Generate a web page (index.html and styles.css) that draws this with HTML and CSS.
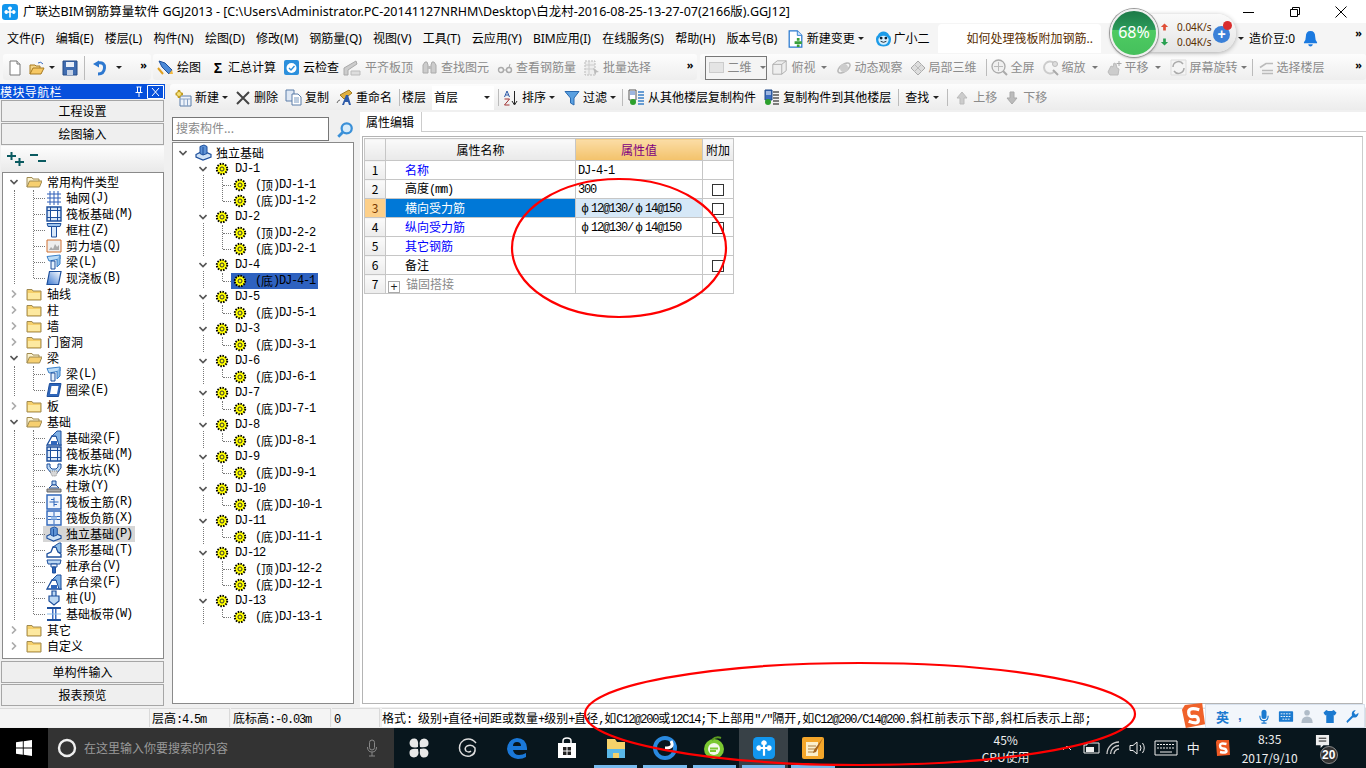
FILE: index.html
```html
<!DOCTYPE html>
<html lang="zh">
<head>
<meta charset="utf-8">
<title>广联达BIM钢筋算量软件 GGJ2013</title>
<link rel="stylesheet" href="styles.css">
</head>
<body>
<svg class="defs" width="0" height="0" aria-hidden="true">
  <symbol id="cd" viewBox="0 0 8 8"><path d="M.5 2 4 5.5 7.500 2" fill="none" stroke="#555" stroke-width="1.600"/></symbol>
  <symbol id="cr" viewBox="0 0 8 8"><path d="M2 .5 5.500 4 2 7.500" fill="none" stroke="#aaa" stroke-width="1.600"/></symbol>
  <symbol id="fc" viewBox="0 0 16 16"><path d="M1 3.500h5l1 1.500h8v9H1z" fill="#f5cf6a" stroke="#a08a50"/><path d="M2 7h12v6H2z" fill="#fde9a0"/></symbol>
  <symbol id="fo" viewBox="0 0 16 16"><path d="M1 13V3.500h5l1 1.500h6v2" fill="#fbf3d0" stroke="#a08a50"/><path d="M1 13l2.500-6H16l-2.500 6z" fill="#f6cf70" stroke="#a08a50"/></symbol>
  <symbol id="gr" viewBox="0 0 14 14"><circle cx="7" cy="7" r="5.200" fill="#ff0" stroke="#000" stroke-width="2" stroke-dasharray="1.500 1.200"/><circle cx="7" cy="7" r="2" fill="none" stroke="#333"/></symbol>
  <symbol id="grid" viewBox="0 0 16 16"><path d="M1 4h14M1 8h14M1 12h14M4 1v14M8 1v14M12 1v14" stroke="#2f5fb8" fill="none"/></symbol>
  <symbol id="raft" viewBox="0 0 16 16"><path d="M1 1h14v14H1z" fill="#d8e6f8" stroke="#1d4f9c" stroke-width="1.400"/><path d="M4.500 4.500h7v7h-7zM1 4.500h14M1 11.500h14M4.500 1v14M11.500 1v14" fill="#fff" stroke="#1d4f9c"/></symbol>
  <symbol id="col" viewBox="0 0 16 16"><path d="M1 1.500h14l-1 3H2z" fill="#9cc3ec" stroke="#1d4f9c"/><path d="M5.500 4.500h5V15h-5z" fill="#d8e8fa" stroke="#1d4f9c"/></symbol>
  <symbol id="wall" viewBox="0 0 16 16"><path d="M1 2h14v12H1z" fill="#eee" stroke="#d07030"/><path d="M3 12l2-3 2 2 2-5 2 3 2-2v5z" fill="#aaa"/></symbol>
  <symbol id="beam" viewBox="0 0 16 16"><path d="M1 2.500 14 1v4L3 7z" fill="#bcdcf6" stroke="#3a80c8"/><path d="M5 7h4v8H5z" fill="#e4f1fc" stroke="#1d4f9c"/><path d="M11 5v8l3-3V1" fill="#8ebde8" stroke="#3a80c8"/></symbol>
  <symbol id="slab" viewBox="0 0 16 16"><path d="M3.500 1.500H15L12.500 14.500H1z" fill="url(#sl)" stroke="#1d4f9c" stroke-width="1.200"/><linearGradient id="sl" x1="0" x2="1" y1="1" y2="0"><stop offset="0" stop-color="#3b78d0"/><stop offset="1" stop-color="#fff"/></linearGradient></symbol>
  <symbol id="ring" viewBox="0 0 16 16"><path d="M3.500 1.500H15L12.500 14.500H1z" fill="#2f66ba" stroke="#1d4f9c"/><path d="M5.500 4h7l-1.500 8H4z" fill="#fff"/></symbol>
  <symbol id="fb" viewBox="0 0 16 16"><path d="M1 15 6 6h4l5 9z" fill="#fff" stroke="#1d4f9c" stroke-width="1.300"/><path d="M6 6 11 1h4v14h-2L10 6z" fill="#7fb0e4" stroke="#1d4f9c"/><path d="M5 11h6v4H5z" fill="#2f66ba"/></symbol>
  <symbol id="pit" viewBox="0 0 16 16"><path d="M1 2h3v3l2 2h4l2-2V2h3v4l-4 5H5L1 6z" fill="#bcd8f4" stroke="#1d4f9c"/><path d="M4 9h8l-2 5H6z" fill="#d8d8d8" stroke="#888" stroke-dasharray="1 1"/></symbol>
  <symbol id="pier" viewBox="0 0 16 16"><path d="M6 3h4v4H6z" fill="#bcd8f4" stroke="#1d4f9c"/><path d="M3 10 6 7h4l3 3z" fill="#eee" stroke="#1d4f9c"/><path d="M1 11h14v3H1z" fill="#aaa" stroke="#666"/></symbol>
  <symbol id="rm" viewBox="0 0 16 16"><path d="M1 1h14v14H1z" fill="#eef4fc" stroke="#2f66ba" stroke-width="1.400"/><path d="M3.500 8h9M8 3.500v9M5 5.500h3M8 10.500h3" stroke="#2f66ba" fill="none"/></symbol>
  <symbol id="rn" viewBox="0 0 16 16"><path d="M1 1h14v14H1z" fill="#eef4fc" stroke="#2f66ba" stroke-width="1.400"/><path d="M2 6.500h12M2 9.500h12M8 2v12" stroke="#2f66ba" fill="none"/><path d="M5 6.500h6v3H5z" fill="#9ec0ea"/></symbol>
  <symbol id="iso" viewBox="0 0 17 17"><path d="M1 10.500 8 7l8 3.500v2.500L8 16l-7-3z" fill="#cfe2f6" stroke="#1d4f9c" stroke-width="1.200"/><path d="M5 2.500 9 1l3 1.500v7L8 11 5 9.500z" fill="#5e93d6" stroke="#1d4f9c"/><path d="M8 3v8" stroke="#1d4f9c"/></symbol>
  <symbol id="strip" viewBox="0 0 16 16"><path d="M1 15v-3l4-2 2-5h3l2 5 3 2v3z" fill="#fff" stroke="#1d4f9c" stroke-width="1.300"/><path d="M7 5l6-4h2v10l-3-1-2-5z" fill="#8ebde8" stroke="#1d4f9c"/></symbol>
  <symbol id="cap" viewBox="0 0 16 16"><path d="M1 2h14l-1 4H2z" fill="#bcd8f4" stroke="#1d4f9c"/><path d="M5 6h6v3H5z" fill="#eef4fc" stroke="#1d4f9c"/><path d="M6.500 9h3v6h-3z" fill="#2f66ba" stroke="#1d4f9c"/></symbol>
  <symbol id="pile" viewBox="0 0 16 16"><path d="M6 1h4v5H6zM3 6h10v5l-5 4-5-4z" fill="#bcd8f4" stroke="#1d4f9c" stroke-width="1.200"/></symbol>
  <symbol id="band" viewBox="0 0 16 16"><path d="M1 2h14M1 14h14" stroke="#1d4f9c" stroke-width="2"/><path d="M6 3h1.500v10H6zM9 3h1.500v10H9z" fill="#3a6cc0"/><path d="M1 8h14" stroke="#8ebde8"/></symbol>
  <symbol id="new" viewBox="0 0 16 16"><path d="M3 1h7l3 3v11H3z" fill="#fff" stroke="#777"/><path d="M10 1v3h3" fill="#eee" stroke="#777"/></symbol>
  <symbol id="open" viewBox="0 0 16 16"><path d="M1 14V5h5l1 1h4v2" fill="#f3d489" stroke="#a87a20"/><path d="M1 14l3-6h11l-3 6z" fill="#f6c864" stroke="#a87a20"/><path d="M9 3q3-2 5 1" fill="none" stroke="#3a6cc0"/></symbol>
  <symbol id="save" viewBox="0 0 16 16"><path d="M1 1h14v14H1z" fill="#3f6cb0" stroke="#244a86"/><path d="M4 2h8v5H4z" fill="#e8eef8"/><path d="M5 10h6v5H5z" fill="#c5d2e6"/></symbol>
  <symbol id="undo" viewBox="0 0 16 16"><path d="M6 3q7-1 6.500 5T6 14" fill="none" stroke="#2d78d0" stroke-width="3"/><path d="M1 4l6-3.500v7z" fill="#2d78d0"/></symbol>
  <symbol id="draw" viewBox="0 0 17 17"><path d="M2 2l6 2 7 7-3 4-7-7z" fill="#4c8ad8" stroke="#1d4f9c"/><path d="M12 15l3-4 1 4z" fill="#f5b93c"/><path d="M1 9l5 6" stroke="#e0a020" stroke-width="2"/></symbol>
  <symbol id="cloud" viewBox="0 0 17 17"><rect x="1" y="1" width="15" height="15" rx="2" fill="#2b8fdc"/><circle cx="8.500" cy="9" r="5" fill="#fff"/><path d="M6 9l2 2 3.500-4" fill="none" stroke="#2b8fdc" stroke-width="1.400"/></symbol>
  <symbol id="dalign" viewBox="0 0 20 17"><path d="M2 16V9l12-7 1 3-9 6v5z" fill="#ccc" stroke="#aaa"/><path d="M9 12h9v4H9z" fill="#ddd" stroke="#bbb"/></symbol>
  <symbol id="dbino" viewBox="0 0 17 17"><path d="M2 14V6l2-3h2l1 3v8zM10 14V6l1-3h2l2 3v8z" fill="#ccc" stroke="#aaa"/><path d="M7 7h3v3H7z" fill="#bbb"/></symbol>
  <symbol id="dglass" viewBox="0 0 16 16"><circle cx="4" cy="10" r="2.500" fill="none" stroke="#aaa" stroke-width="1.400"/><circle cx="12" cy="10" r="2.500" fill="none" stroke="#aaa" stroke-width="1.400"/><path d="M6.500 10h3M12 7.500 13 4" stroke="#aaa" fill="none"/></symbol>
  <symbol id="dbatch" viewBox="0 0 16 16"><path d="M1 1h10v14H1z" fill="#eee" stroke="#bbb" stroke-dasharray="2 1"/><path d="M1 5h10M1 9h10M5 1v14" stroke="#ccc"/><path d="M9 8l6 4-3 .5-.5 3z" fill="#bbb"/></symbol>
  <symbol id="dcube" viewBox="0 0 19 17"><path d="M2 5l5-4h10v11l-5 4H2z" fill="#eee" stroke="#aaa"/><path d="M2 5h10v11M12 5l5-4" fill="none" stroke="#aaa"/></symbol>
  <symbol id="dorbit" viewBox="0 0 16 16"><ellipse cx="8" cy="8" rx="7" ry="3.500" transform="rotate(-35 8 8)" fill="none" stroke="#bbb" stroke-width="1.600"/><circle cx="8" cy="8" r="4" fill="#ccc"/></symbol>
  <symbol id="dpart" viewBox="0 0 16 16"><path d="M8 1l7 7-7 7-7-7z" fill="#ddd" stroke="#aaa"/><path d="M4 4l8 8M12 4l-8 8" stroke="#bbb"/></symbol>
  <symbol id="dfull" viewBox="0 0 17 17"><circle cx="7.500" cy="7.500" r="6.500" fill="#f0f0f0" stroke="#aaa" stroke-width="1.300"/><path d="M7.500 3v9M3 7.500h9" stroke="#bbb"/><path d="M12 12l4 4" stroke="#aaa" stroke-width="2"/></symbol>
  <symbol id="dzoom" viewBox="0 0 16 16"><path d="M11 3a6 6 0 1 0 0 9" fill="none" stroke="#ccc" stroke-width="2"/><circle cx="12" cy="4" r="2.500" fill="#ddd" stroke="#bbb"/><path d="M10 10l5 5" stroke="#aaa" stroke-width="2"/></symbol>
  <symbol id="dpan" viewBox="0 0 16 16"><path d="M2 12l3-6 2 1 1-4 2 1 1 4 2 1-1 6H4z" fill="#ccc" stroke="#bbb"/><path d="M13 1v5M10.500 3.500h5" stroke="#aaa"/></symbol>
  <symbol id="drot" viewBox="0 0 17 17"><path d="M1 1h15v15H1z" fill="#f4f4f4" stroke="#ddd"/><path d="M3 8a5.500 5.500 0 0 1 10-3M14 9a5.500 5.500 0 0 1-10 3" fill="none" stroke="#aaa" stroke-width="1.500"/></symbol>
  <symbol id="dlay" viewBox="0 0 15 15"><path d="M1 7l6-4h7M3 10h11M3 13h11" fill="none" stroke="#bbb" stroke-width="1.600"/></symbol>
  <symbol id="tnew" viewBox="0 0 18 18"><path d="M6 7h11v10H6z" fill="#eef3fa" stroke="#5a7ca8"/><path d="M6 10h11M10 10v7M13.500 10v7" stroke="#8aa4c6"/><path d="M5 1v3M1.500 5H4.500M6 5h3M5 6v3" stroke="#c09a20" stroke-width="2.400"/><circle cx="5" cy="5" r="2.500" fill="#f6e27a" stroke="#c09a20"/></symbol>
  <symbol id="tdel" viewBox="0 0 16 16"><path d="M2 2l12 12M14 2 2 14" stroke="#444" stroke-width="2"/></symbol>
  <symbol id="tcopy" viewBox="0 0 17 17"><path d="M1 1h8v11H1z" fill="#dfe8f4" stroke="#5a7ca8"/><path d="M7 5h6l3 3v8H7z" fill="#fff" stroke="#5a7ca8"/><path d="M9 9h5M9 11h5M9 13h5" stroke="#7a9ac0"/></symbol>
  <symbol id="tren" viewBox="0 0 17 17"><path d="M4 6l9-5 3 3-8 6z" fill="#e0b040" stroke="#a07a20"/><path d="M1 14q1-3 3-3" fill="none" stroke="#666"/><path d="M6 16l4-10h2l3 10h-2l-1-3H9l-1 3z" fill="#2d5aa8"/></symbol>
  <symbol id="tsort" viewBox="0 0 16 16"><path d="M11.500 1v13M9 11l2.500 4 2.500-4" fill="none" stroke="#222"/><path d="M1.500 7 4 1l2.500 6M2.500 5h3" fill="none" stroke="#2d5aa8"/><path d="M1.500 9h5l-5 6h5" fill="none" stroke="#a03030"/></symbol>
  <symbol id="tfil" viewBox="0 0 16 16"><path d="M1 1.500h14L10 8v7L6.500 13V8z" fill="#5aa0e0" stroke="#2a6ab0"/></symbol>
  <symbol id="tc1" viewBox="0 0 17 17"><path d="M1 1h7v10H1z" fill="#fff" stroke="#555"/><path d="M2 3h5M2 5h5" stroke="#3a6cc0"/><path d="M10 3h6M10 6h6M10 9h6M10 12h6M10 15h6" stroke="#3a80c8" stroke-width="1.600"/><circle cx="5" cy="13" r="3" fill="#2ca02c"/></symbol>
  <symbol id="tc2" viewBox="0 0 17 17"><path d="M2 1h7v10H2z" fill="#3a6cc0" stroke="#234a88"/><path d="M3 3h5M3 5h5" stroke="#fff"/><path d="M10 3h6M10 6h6M10 9h6M10 12h6M10 15h6" stroke="#555" stroke-width="1.600"/><circle cx="5" cy="13" r="3" fill="#2ca02c"/></symbol>
  <symbol id="tup" viewBox="0 0 16 16"><path d="M8 2l5 6h-3v6H6V8H3z" fill="#ccc" stroke="#bbb"/></symbol>
  <symbol id="tdn" viewBox="0 0 16 16"><path d="M8 14l5-6h-3V2H6v6H3z" fill="#bbb" stroke="#aaa"/></symbol>
  <symbol id="glddoc" viewBox="0 0 18 20"><path d="M2 1h9l5 5v13H2z" fill="#fff" stroke="#2a7ad0" stroke-width="1.400"/><path d="M11 1v5h5" fill="#cfe4fa" stroke="#2a7ad0"/><path d="M12 9v3M12 16v3M8 14h8" stroke="#3aa03a" stroke-width="3"/></symbol>
  <symbol id="gxe" viewBox="0 0 18 18"><path d="M1 9q0-3 2-4 2-4 6-4t6 4q2 1 2 4 0 8-8 8T1 9z" fill="#1c9be8"/><path d="M3.500 10a5.500 4.500 0 0 1 11 0q-1 5-5.500 5T3.500 10" fill="#d8f0fd"/><circle cx="6.500" cy="8" r="1.500" fill="#123"/><circle cx="11.500" cy="8" r="1.500" fill="#123"/><path d="M6 11.500q3 2 6 0" fill="none" stroke="#123"/></symbol>
  <symbol id="app" viewBox="0 0 20 20"><rect width="20" height="20" rx="4" fill="#1296ee"/><path d="M10 3a2.500 2.500 0 0 1 2 4h-1v2h2V8a2.500 2.500 0 0 1 4 2 2.500 2.500 0 0 1-4 2v-1h-2v6H9v-6H7v1a2.500 2.500 0 0 1-4-2 2.500 2.500 0 0 1 4-2v1h2V7H8a2.500 2.500 0 0 1 2-4z" fill="#fff"/></symbol>
</svg>

<header class="title">
  <svg class="title-ico"><use href="#app"/></svg>
  <span>广联达BIM钢筋算量软件 GGJ2013 - [C:\Users\Administrator.PC-20141127NRHM\Desktop\白龙村-2016-08-25-13-27-07(2166版).GGJ12]</span>
  <div class="win">
    <svg viewBox="0 0 14 14" class="win-b"><path d="M1 7.500h11" stroke="#000"/></svg>
    <svg viewBox="0 0 14 14" class="win-b"><path d="M2.500 4.500h7v7h-7zM4.500 4.500v-2h7v7h-2" fill="none" stroke="#000"/></svg>
    <svg viewBox="0 0 14 14" class="win-b"><path d="M1.500 1.500l11 11M12.500 1.500l-11 11" stroke="#000"/></svg>
  </div>
</header>

<nav class="menu">
  <span>文件(F)</span><span>编辑(E)</span><span>楼层(L)</span><span>构件(N)</span><span>绘图(D)</span><span>修改(M)</span><span>钢筋量(Q)</span><span>视图(V)</span><span>工具(T)</span><span>云应用(Y)</span><span>BIM应用(I)</span><span>在线服务(S)</span><span>帮助(H)</span><span>版本号(B)</span>
  <svg class="mi"><use href="#glddoc"/></svg><span class="after-ico">新建变更</span><b class="dd"></b>
  <svg class="mi gx"><use href="#gxe"/></svg><span class="after-ico">广小二</span>
  <div class="ask">如何处理筏板附加钢筋..</div>
  <b class="dd tail-dd"></b>
  <span class="bean">造价豆:0</span>
  <svg class="bell" viewBox="0 0 16 18"><path d="M8 1q5 0 5 6 0 4 2 6v1H1v-1q2-2 2-6 0-6 5-6z" fill="#1b7ae0"/><path d="M5.500 15h5Q10 17.500 8 17.500T5.500 15z" fill="#1b7ae0"/></svg>
  <span class="more end">»</span>
</nav>

<div class="tb1">
  <div class="grp g1">
    <svg class="w16"><use href="#new"/></svg>
    <svg class="w16 m6"><use href="#open"/></svg><b class="dd m4"></b>
    <svg class="w16 m7"><use href="#save"/></svg>
    <i class="sep tall m6"></i>
    <svg class="w16 m7"><use href="#undo"/></svg><b class="dd m8"></b>
    <span class="more end">»</span>
  </div>
  <div class="grp g2">
    <span class="t"><svg class="w17"><use href="#draw"/></svg>绘图</span>
    <span class="t m10"><span class="sigma">Σ</span>汇总计算</span>
    <span class="t m7"><svg class="w17"><use href="#cloud"/></svg>云检查</span>
    <span class="t m3 off"><svg class="w20"><use href="#dalign"/></svg>平齐板顶</span>
    <span class="t m8 off"><svg class="w17"><use href="#dbino"/></svg>查找图元</span>
    <span class="t m8 off"><svg class="w16"><use href="#dglass"/></svg>查看钢筋量</span>
    <span class="t m8 off"><svg class="w16"><use href="#dbatch"/></svg>批量选择</span>
    <span class="more end">»</span>
  </div>
  <div class="grp g3">
    <div class="combo2"><i class="plane"></i><span>二维</span><b class="dd grey"></b></div>
    <span class="t m4 off"><svg class="w17"><use href="#dcube"/></svg>俯视</span><b class="dd grey m5"></b>
    <span class="t m9 off"><svg class="w16"><use href="#dorbit"/></svg>动态观察</span>
    <span class="t m7 off"><svg class="w16"><use href="#dpart"/></svg>局部三维</span>
    <i class="sep m9"></i>
    <span class="t m4 off"><svg class="w17"><use href="#dfull"/></svg>全屏</span>
    <span class="t m8 off"><svg class="w16"><use href="#dzoom"/></svg>缩放</span><b class="dd grey m6"></b>
    <span class="t m8 off"><svg class="w16"><use href="#dpan"/></svg>平移</span><b class="dd grey m6"></b>
    <span class="t m9 off"><svg class="w17"><use href="#drot"/></svg>屏幕旋转</span><b class="dd grey m3"></b>
    <i class="sep m5"></i>
    <span class="t m6 off"><svg class="w15"><use href="#dlay"/></svg>选择楼层</span>
    <span class="more end">»</span>
  </div>
</div>

<div class="work">
  <aside class="nav">
    <div class="nav-head"><span class="nav-t">模块导航栏</span>
      <svg class="pin" viewBox="0 0 10 12"><path d="M2.500 1h5M3.500 1v5M6.500 1v5M1.500 6.500h7M5 6.500V11" stroke="#fff" fill="none"/></svg>
      <svg class="close" viewBox="0 0 17 14"><path d="M.5.500h16v13H.5zM5 3l7 8M12 3l-7 8" stroke="#fff" fill="none"/></svg>
    </div>
    <div class="btn">工程设置</div>
    <div class="btn">绘图输入</div>
    <div class="expand">
      <svg viewBox="0 0 17 14" class="exp"><path d="M0 4h9M4.500 0v8M8 10h9M12.500 6v8" stroke="#0a5a60" stroke-width="2"/></svg>
      <svg viewBox="0 0 17 14" class="exp"><path d="M0 3h8M8 9h8" stroke="#0a5a60" stroke-width="2"/></svg>
    </div>
    <div class="tree sim">
      <div class="grp-l open">
        <div class="r0"><svg class="ch"><use href="#cd"/></svg><svg class="fd"><use href="#fo"/></svg>常用构件类型</div>
        <div class="kids">
          <div class="r1"><svg><use href="#grid"/></svg>轴网<i>(J)</i></div>
          <div class="r1"><svg><use href="#raft"/></svg>筏板基础<i>(M)</i></div>
          <div class="r1"><svg><use href="#col"/></svg>框柱<i>(Z)</i></div>
          <div class="r1"><svg><use href="#wall"/></svg>剪力墙<i>(Q)</i></div>
          <div class="r1"><svg><use href="#beam"/></svg>梁<i>(L)</i></div>
          <div class="r1"><svg><use href="#slab"/></svg>现浇板<i>(B)</i></div>
        </div>
      </div>
      <div class="r0"><svg class="ch"><use href="#cr"/></svg><svg class="fd"><use href="#fc"/></svg>轴线</div>
      <div class="r0"><svg class="ch"><use href="#cr"/></svg><svg class="fd"><use href="#fc"/></svg>柱</div>
      <div class="r0"><svg class="ch"><use href="#cr"/></svg><svg class="fd"><use href="#fc"/></svg>墙</div>
      <div class="r0"><svg class="ch"><use href="#cr"/></svg><svg class="fd"><use href="#fc"/></svg>门窗洞</div>
      <div class="grp-l open">
        <div class="r0"><svg class="ch"><use href="#cd"/></svg><svg class="fd"><use href="#fo"/></svg>梁</div>
        <div class="kids">
          <div class="r1"><svg><use href="#beam"/></svg>梁<i>(L)</i></div>
          <div class="r1"><svg><use href="#ring"/></svg>圈梁<i>(E)</i></div>
        </div>
      </div>
      <div class="r0"><svg class="ch"><use href="#cr"/></svg><svg class="fd"><use href="#fc"/></svg>板</div>
      <div class="grp-l open">
        <div class="r0"><svg class="ch"><use href="#cd"/></svg><svg class="fd"><use href="#fo"/></svg>基础</div>
        <div class="kids">
          <div class="r1"><svg><use href="#fb"/></svg>基础梁<i>(F)</i></div>
          <div class="r1"><svg><use href="#raft"/></svg>筏板基础<i>(M)</i></div>
          <div class="r1"><svg><use href="#pit"/></svg>集水坑<i>(K)</i></div>
          <div class="r1"><svg><use href="#pier"/></svg>柱墩<i>(Y)</i></div>
          <div class="r1"><svg><use href="#rm"/></svg>筏板主筋<i>(R)</i></div>
          <div class="r1"><svg><use href="#rn"/></svg>筏板负筋<i>(X)</i></div>
          <div class="r1 cur"><svg><use href="#iso"/></svg>独立基础<i>(P)</i></div>
          <div class="r1"><svg><use href="#strip"/></svg>条形基础<i>(T)</i></div>
          <div class="r1"><svg><use href="#cap"/></svg>桩承台<i>(V)</i></div>
          <div class="r1"><svg><use href="#fb"/></svg>承台梁<i>(F)</i></div>
          <div class="r1"><svg><use href="#pile"/></svg>桩<i>(U)</i></div>
          <div class="r1"><svg><use href="#band"/></svg>基础板带<i>(W)</i></div>
        </div>
      </div>
      <div class="r0"><svg class="ch"><use href="#cr"/></svg><svg class="fd"><use href="#fc"/></svg>其它</div>
      <div class="r0"><svg class="ch"><use href="#cr"/></svg><svg class="fd"><use href="#fc"/></svg>自定义</div>
    </div>
    <div class="btn">单构件输入</div>
    <div class="btn">报表预览</div>
  </aside>

  <main class="main">
    <div class="tb2">
      <span class="t"><svg class="w18"><use href="#tnew"/></svg>新建</span><b class="dd m3"></b>
      <span class="t m7"><svg class="w16"><use href="#tdel"/></svg>删除</span>
      <span class="t m7"><svg class="w17"><use href="#tcopy"/></svg>复制</span>
      <span class="t m7"><svg class="w17"><use href="#tren"/></svg>重命名</span>
      <i class="sep m7"></i>
      <span class="m2">楼层</span>
      <div class="floor m6">首层<b class="dd"></b></div>
      <i class="sep m4"></i>
      <span class="t m4"><svg class="w16"><use href="#tsort"/></svg>排序</span><b class="dd m3"></b>
      <span class="t m9"><svg class="w16"><use href="#tfil"/></svg>过滤</span><b class="dd m3"></b>
      <i class="sep m6"></i>
      <span class="t m5"><svg class="w17"><use href="#tc1"/></svg>从其他楼层复制构件</span>
      <span class="t m7"><svg class="w17"><use href="#tc2"/></svg>复制构件到其他楼层</span>
      <i class="sep m7"></i>
      <span class="m6">查找</span><b class="dd m4"></b>
      <i class="sep m8"></i>
      <span class="t m6 off"><svg class="w16"><use href="#tup"/></svg>上移</span>
      <span class="t m7 off"><svg class="w16"><use href="#tdn"/></svg>下移</span>
    </div>
    <div class="content">
      <section class="mid">
        <div class="search">
          <div class="search-box">搜索构件...</div>
          <svg class="search-ico" viewBox="0 0 16 16"><circle cx="9.500" cy="6.500" r="4.500" fill="#d8ecfa" stroke="#3a90d8" stroke-width="2"/><path d="M6 10l-4 4" stroke="#3a90d8" stroke-width="2.500"/></svg>
        </div>
        <div class="ctree sim">
          <div class="c0"><svg class="ch"><use href="#cd"/></svg><svg class="rooti"><use href="#iso"/></svg>独立基础</div>
          <div class="cg"><div class="c1"><svg class="ch"><use href="#cd"/></svg><svg class="gi"><use href="#gr"/></svg><i>DJ-1</i></div>
            <div class="ck"><div class="c2"><span class="cell"><svg class="gi"><use href="#gr"/></svg><i>(</i>顶<i>)DJ-1-1</i></span></div><div class="c2"><span class="cell"><svg class="gi"><use href="#gr"/></svg><i>(</i>底<i>)DJ-1-2</i></span></div></div></div>
          <div class="cg"><div class="c1"><svg class="ch"><use href="#cd"/></svg><svg class="gi"><use href="#gr"/></svg><i>DJ-2</i></div>
            <div class="ck"><div class="c2"><span class="cell"><svg class="gi"><use href="#gr"/></svg><i>(</i>顶<i>)DJ-2-2</i></span></div><div class="c2"><span class="cell"><svg class="gi"><use href="#gr"/></svg><i>(</i>底<i>)DJ-2-1</i></span></div></div></div>
          <div class="cg"><div class="c1"><svg class="ch"><use href="#cd"/></svg><svg class="gi"><use href="#gr"/></svg><i>DJ-4</i></div>
            <div class="ck"><div class="c2"><span class="cell sel"><svg class="gi"><use href="#gr"/></svg><i>(</i>底<i>)DJ-4-1</i></span></div></div></div>
          <div class="cg"><div class="c1"><svg class="ch"><use href="#cd"/></svg><svg class="gi"><use href="#gr"/></svg><i>DJ-5</i></div>
            <div class="ck"><div class="c2"><span class="cell"><svg class="gi"><use href="#gr"/></svg><i>(</i>底<i>)DJ-5-1</i></span></div></div></div>
          <div class="cg"><div class="c1"><svg class="ch"><use href="#cd"/></svg><svg class="gi"><use href="#gr"/></svg><i>DJ-3</i></div>
            <div class="ck"><div class="c2"><span class="cell"><svg class="gi"><use href="#gr"/></svg><i>(</i>底<i>)DJ-3-1</i></span></div></div></div>
          <div class="cg"><div class="c1"><svg class="ch"><use href="#cd"/></svg><svg class="gi"><use href="#gr"/></svg><i>DJ-6</i></div>
            <div class="ck"><div class="c2"><span class="cell"><svg class="gi"><use href="#gr"/></svg><i>(</i>底<i>)DJ-6-1</i></span></div></div></div>
          <div class="cg"><div class="c1"><svg class="ch"><use href="#cd"/></svg><svg class="gi"><use href="#gr"/></svg><i>DJ-7</i></div>
            <div class="ck"><div class="c2"><span class="cell"><svg class="gi"><use href="#gr"/></svg><i>(</i>底<i>)DJ-7-1</i></span></div></div></div>
          <div class="cg"><div class="c1"><svg class="ch"><use href="#cd"/></svg><svg class="gi"><use href="#gr"/></svg><i>DJ-8</i></div>
            <div class="ck"><div class="c2"><span class="cell"><svg class="gi"><use href="#gr"/></svg><i>(</i>底<i>)DJ-8-1</i></span></div></div></div>
          <div class="cg"><div class="c1"><svg class="ch"><use href="#cd"/></svg><svg class="gi"><use href="#gr"/></svg><i>DJ-9</i></div>
            <div class="ck"><div class="c2"><span class="cell"><svg class="gi"><use href="#gr"/></svg><i>(</i>底<i>)DJ-9-1</i></span></div></div></div>
          <div class="cg"><div class="c1"><svg class="ch"><use href="#cd"/></svg><svg class="gi"><use href="#gr"/></svg><i>DJ-10</i></div>
            <div class="ck"><div class="c2"><span class="cell"><svg class="gi"><use href="#gr"/></svg><i>(</i>底<i>)DJ-10-1</i></span></div></div></div>
          <div class="cg"><div class="c1"><svg class="ch"><use href="#cd"/></svg><svg class="gi"><use href="#gr"/></svg><i>DJ-11</i></div>
            <div class="ck"><div class="c2"><span class="cell"><svg class="gi"><use href="#gr"/></svg><i>(</i>底<i>)DJ-11-1</i></span></div></div></div>
          <div class="cg"><div class="c1"><svg class="ch"><use href="#cd"/></svg><svg class="gi"><use href="#gr"/></svg><i>DJ-12</i></div>
            <div class="ck"><div class="c2"><span class="cell"><svg class="gi"><use href="#gr"/></svg><i>(</i>顶<i>)DJ-12-2</i></span></div><div class="c2"><span class="cell"><svg class="gi"><use href="#gr"/></svg><i>(</i>底<i>)DJ-12-1</i></span></div></div></div>
          <div class="cg"><div class="c1"><svg class="ch"><use href="#cd"/></svg><svg class="gi"><use href="#gr"/></svg><i>DJ-13</i></div>
            <div class="ck"><div class="c2"><span class="cell"><svg class="gi"><use href="#gr"/></svg><i>(</i>底<i>)DJ-13-1</i></span></div></div></div>
        </div>
      </section>
      <section class="right">
        <div class="tabs"><div class="tab">属性编辑</div></div>
        <div class="panel sim">
          <table class="props">
            <colgroup><col class="c-n"><col class="c-a"><col class="c-v"><col class="c-x"></colgroup>
            <thead><tr><th></th><th>属性名称</th><th class="hv">属性值</th><th>附加</th></tr></thead>
            <tbody>
              <tr><th>1</th><td class="nm link">名称</td><td class="val"><i>DJ-4-1</i></td><td></td></tr>
              <tr><th>2</th><td class="nm">高度<i>(mm)</i></td><td class="val"><i>300</i></td><td class="chk"><u></u></td></tr>
              <tr class="on"><th>3</th><td class="nm">横向受力筋</td><td class="val"><i class="hrb first">ф</i><i>12@130/</i><i class="hrb">ф</i><i>14@150</i></td><td class="chk"><u></u></td></tr>
              <tr><th>4</th><td class="nm link">纵向受力筋</td><td class="val"><i class="hrb first">ф</i><i>12@130/</i><i class="hrb">ф</i><i>14@150</i></td><td class="chk"><u></u></td></tr>
              <tr><th>5</th><td class="nm link">其它钢筋</td><td></td><td></td></tr>
              <tr><th>6</th><td class="nm">备注</td><td></td><td class="chk"><u></u></td></tr>
              <tr><th>7</th><td class="grp-row"><b class="plus">+</b>锚固搭接</td><td></td><td></td></tr>
            </tbody>
          </table>
        </div>
      </section>
    </div>
  </main>
</div>

<footer class="status sim">
  <div class="s s0"></div>
  <div class="s s1">层高<i>:4.5m</i></div>
  <div class="s s2">底标高<i>:-0.03m</i></div>
  <div class="s s3"><i>0</i></div>
  <div class="s s4">格式<i>: </i>级别<i>+</i>直径<i>+</i>间距或数量<i>+</i>级别<i>+</i>直径<i>,</i>如<i>C12@200</i>或<i>12C14;</i>下上部用<i>"/"</i>隔开<i>,</i>如<i>C12@200/C14@200.</i>斜杠前表示下部<i>,</i>斜杠后表示上部<i>;</i></div>
</footer>

<div class="taskbar">
  <div class="start"><svg viewBox="0 0 16 16" class="winlogo"><path d="M0 2.300 6.800 1.300v6.300H0zM7.700 1.200 16 0v7.600H7.700zM0 8.400h6.800v6.300L0 13.700zM7.700 8.400H16V16l-8.300-1.200z" fill="#fff"/></svg></div>
  <div class="tsearch">
    <svg viewBox="0 0 20 20" class="cortana"><circle cx="10" cy="10" r="8" fill="none" stroke="#eee" stroke-width="2.400"/></svg>
    <span>在这里输入你要搜索的内容</span>
    <svg viewBox="0 0 12 18" class="mic"><rect x="3.500" y="1" width="5" height="10" rx="2.500" fill="none" stroke="#888"/><path d="M1.500 8q0 5 4.500 5t4.500-5M6 13v4M3 17h6" fill="none" stroke="#888"/></svg>
  </div>
  <div class="apps">
    <div class="app"><svg viewBox="0 0 24 24"><path d="M11 11Q3 13 2.500 7 3 2 8 2.500 12 3 11 11zM13 11Q11 3 17 2.500 22 3 21.500 8 21 12 13 11zM13 13Q21 11 21.500 17 21 22 16 21.500 12 21 13 13zM11 13Q13 21 7 21.500 2 21 2.500 16 3 12 11 13z" fill="#e8e8e8"/></svg></div>
    <div class="app"><svg viewBox="0 0 24 24"><path d="M20 7Q15 1 8 4 2 8 4 15q3 6 10 5 6-2 5-8-3-4-8-2-3 2-1 5 3 2 5 0" fill="none" stroke="#ddd" stroke-width="1.500"/></svg></div>
    <div class="app"><svg viewBox="0 0 24 24"><path d="M2 13Q3 3 12 2q9 0 10 10v2H8q1 5 6 5 4 0 7-2v4q-3 2-8 2Q3 22 2 13zM8 10h8q0-4-4-4t-4 4z" fill="#1a78d8"/></svg></div>
    <div class="app"><svg viewBox="0 0 24 24"><path d="M3 7h18v15H3z" fill="#fff"/><path d="M8 7V5q0-3 4-3t4 3v2" fill="none" stroke="#fff" stroke-width="1.500"/><path d="M8 11h3.500v3.500H8zM12.500 11H16v3.500h-3.500zM8 15.500h3.500V19H8zM12.500 15.500H16V19h-3.500z" fill="#222"/></svg></div>
    <div class="app run"><svg viewBox="0 0 24 24"><path d="M3 3h8l2 3h8v16H3z" fill="#f6d26a"/><path d="M3 13h18v9H3z" fill="#5ab8e8"/><path d="M9 22v-5h6v5z" fill="#f6d26a"/></svg></div>
    <div class="app run"><svg viewBox="0 0 24 24"><circle cx="12" cy="12" r="10" fill="none" stroke="#2a8ae0" stroke-width="4"/><path d="M18 5Q22 12 12 12" fill="none" stroke="#fff" stroke-width="3"/></svg></div>
    <div class="app run"><svg viewBox="0 0 24 24"><circle cx="12" cy="13" r="10" fill="#7bc832"/><circle cx="12" cy="13" r="6" fill="#f4f8ec"/><path d="M8 12.500h8M8 15h6" stroke="#7bc832" stroke-width="2"/><path d="M10 4q4-4 9-2" fill="none" stroke="#5a9a20" stroke-width="2"/></svg></div>
    <div class="app run act"><svg><use href="#app"/></svg></div>
    <div class="app run"><svg viewBox="0 0 24 24"><rect x="1" y="1" width="22" height="22" rx="2" fill="#f4a62a"/><path d="M5 6h12v14H5z" fill="#fbeecb"/><path d="M7 10h8M7 13h8M7 16h6" stroke="#b08040"/><path d="M22 2 13 14l-1 3 3-1z" fill="#a8641c"/></svg></div>
  </div>
  <div class="cpu"><span>45%</span><span>CPU使用</span></div>
  <div class="tray">
    <svg viewBox="0 0 12 12" class="ti-s"><path d="M2 8l4-4 4 4" fill="none" stroke="#eee"/></svg>
    <svg viewBox="0 0 20 16" class="ti"><path d="M2 5h3V3h12v10H2z" fill="none" stroke="#eee"/><path d="M4 7h8v5H4z" fill="#eee"/></svg>
    <svg viewBox="0 0 20 16" class="ti"><path d="M2 14A12 12 0 0 1 14 2M5.500 14A8.500 8.500 0 0 1 14 5.500M9 14a5 5 0 0 1 5-5" fill="none" stroke="#ccc" stroke-width="1.300"/></svg>
    <svg viewBox="0 0 20 16" class="ti"><path d="M2 5.500h3L9 2v12L5 10.500H2z" fill="none" stroke="#eee"/><path d="M12 5q2 3 0 6M14.500 3q3.500 5 0 10" fill="none" stroke="#eee"/></svg>
    <svg viewBox="0 0 24 16" class="ti kb"><path d="M1 1h22v14H1z" fill="none" stroke="#eee"/><path d="M3 4.500h18M3 8h18" stroke="#eee" stroke-dasharray="2 1"/><path d="M6 12h12" stroke="#eee"/></svg>
    <span class="zh">中</span>
    <svg viewBox="0 0 16 18" class="ti-so"><path d="M2 1h12l1 15-13 1-1-14z" fill="#ee5a24"/><path d="M11.500 5Q5 3.500 5 6.500t3 3 3.500 2.500-6.500 1" fill="none" stroke="#fff" stroke-width="2.400"/></svg>
  </div>
  <div class="clock"><span>8:35</span><span>2017/9/10</span></div>
  <div class="notif">
    <svg viewBox="0 0 16 16" class="note"><path d="M1 1h14v11H9l-3 3v-3H1z" fill="#eee"/><path d="M4 4.500h8M4 7.500h8" stroke="#111"/></svg>
    <span class="badge">20</span>
  </div>
</div>

<div class="netw">
  <div class="pill">
    <div class="speed"><svg viewBox="0 0 10 10"><path d="M5 1l4 4H6.500v4h-3V5H1z" fill="#e05038"/></svg><span>0.04K/s</span></div>
    <div class="speed"><svg viewBox="0 0 10 10"><path d="M5 9l4-4H6.500V1h-3v4H1z" fill="#28a050"/></svg><span>0.04K/s</span></div>
    <div class="plusb">+<i class="reddot"></i></div>
  </div>
  <div class="ball">68%</div>
</div>

<div class="sogou">
  <svg viewBox="0 0 26 28" class="so-s"><path d="M4 3 22 1l3 22L5 27 1 8z" fill="#f0622a"/><path d="M19 8Q8 5 8 10.500t5 4.500 5 4-10 1" fill="none" stroke="#fff" stroke-width="3.400"/></svg>
  <div class="so-bar">
    <span class="so-en">英</span>
    <span class="so-p">,</span>
    <svg viewBox="0 0 14 18" class="so-i"><rect x="4" y="1" width="6" height="11" rx="3" fill="#1b7ad0"/><path d="M2 8q0 6 5 6t5-6M7 14v3M4 17h6" fill="none" stroke="#1b7ad0" stroke-width="1.400"/></svg>
    <svg viewBox="0 0 18 14" class="so-i"><rect x="1" y="1" width="16" height="12" rx="1" fill="#1b7ad0"/><path d="M3 4h12M3 7h12M5 10h8" stroke="#fff" stroke-dasharray="2 1"/></svg>
    <svg viewBox="0 0 16 16" class="so-i"><circle cx="7" cy="4" r="3" fill="#b0bcc8"/><path d="M1 15q0-7 6-7t6 7z" fill="#b0bcc8"/></svg>
    <svg viewBox="0 0 16 16" class="so-i"><path d="M4 1 1 4l2 3 1-1v9h8V6l1 1 2-3-3-3-2 1H6z" fill="#1b7ad0"/></svg>
    <svg viewBox="0 0 16 16" class="so-i"><path d="M2 13 8 7q-1-4 2-5.500L12 1l-2 3 2 2 3-2q0 3-2 4.500-2 1-4 .5l-6 6z" fill="#1b7ad0"/></svg>
  </div>
</div>

<svg class="marks" viewBox="0 0 1366 768" aria-hidden="true">
  <ellipse cx="619" cy="248" rx="107" ry="69" fill="none" stroke="#f00" stroke-width="2.200"/>
  <ellipse cx="860" cy="714" rx="275" ry="51" fill="none" stroke="#f00" stroke-width="2.200"/>
</svg>
</body>
</html>
```
FILE: styles.css
```css
* { box-sizing: border-box; }
html, body { margin: 0; padding: 0; }
body {
  width: 1366px; height: 768px; overflow: hidden; position: relative;
  display: flex; flex-direction: column;
  background: #f0f0f0; color: #000;
  font: 12px/16px "Noto Sans", "Noto Sans CJK SC", sans-serif;
}
.defs { position: absolute; }
svg { display: block; flex: none; }
.sim { font-family: "Noto Sans CJK SC", sans-serif; }
.sim i { font-style: normal; font-family: "Liberation Mono", monospace; letter-spacing: -1.2px; }

.m2 { margin-left: 2px; } .m3 { margin-left: 3px; } .m4 { margin-left: 4px; }
.m5 { margin-left: 5px; } .m6 { margin-left: 6px; } .m7 { margin-left: 7px; }
.m8 { margin-left: 8px; } .m9 { margin-left: 9px; } .m10 { margin-left: 10px; }
.w15 { width: 15px; height: 16px; } .w16 { width: 16px; height: 16px; }
.w17 { width: 17px; height: 17px; } .w18 { width: 18px; height: 18px; }
.w20 { width: 20px; height: 17px; }

/* title */
.title { height: 23px; flex: none; background: #fff; display: flex; align-items: center; padding-left: 2px; position: relative; white-space: nowrap; font-size: 12.500px; }
.title-ico { width: 16px; height: 16px; margin-right: 5px; }
.win { margin-left: auto; display: flex; margin-right: 18px; gap: 32px; }
.win-b { width: 14px; height: 14px; }

/* menu */
.menu { height: 31px; flex: none; display: flex; align-items: center; gap: 11.200px; padding-left: 7px; background: #f5f5f5; white-space: nowrap; }
.mi { width: 17px; height: 18px; margin-left: -2px; }
.mi.gx { margin-left: 0; }
.after-ico { margin-left: -8px; }
.gx + .after-ico { margin-left: -10px; }
.menu .dd { margin-left: -8px; }
.ask { width: 163px; height: 29px; margin-left: -3px; background: #fff; color: #5a2e00; padding: 7px 0 0 29px; border-radius: 4px 4px 0 0; overflow: hidden; }
.menu .tail-dd { margin-left: 126px; }
.bean { margin-left: -6px; }
.bell { width: 15px; height: 17px; margin-left: -3px; }
.more { font-size: 11px; font-weight: 700; line-height: 10px; align-self: flex-start; margin-top: 5px; }
.end { margin-left: auto; margin-right: 4px; }
.dd { display: block; flex: none; width: 0; height: 0; border: 3px solid transparent; border-top: 3px solid #222; border-bottom: 0; }
.dd.grey { border-top-color: #777; }

/* toolbar 1 */
.tb1 { height: 30px; flex: none; display: flex; background: #f5f5f5; padding-bottom: 4px; padding-left: 3px; gap: 2px; white-space: nowrap; }
.grp { display: flex; align-items: center; height: 26px; padding-top: 1px; background: linear-gradient(#fdfdfd, #eee); border-radius: 3px; position: relative; }
.g1 { width: 148px; padding-left: 4px; }
.g2 { width: 545px; padding-left: 4px; }
.g3 { width: 666px; padding-left: 5px; margin-left: 1px; }
.t { display: inline-flex; align-items: center; gap: 3px; flex: none; }
.off { color: #8b8b8b; }
.sigma { width: 14px; text-align: center; font: 700 14px "Liberation Sans", sans-serif; }
.sep { display: block; flex: none; width: 1px; height: 17px; background: #bbb; }
.sep.tall { height: 24px; }
.combo2 { width: 62px; height: 24px; flex: none; border: 1px solid #777; display: flex; align-items: center; padding-left: 3px; color: #888; background: #f4f4f4; }
.plane { display: block; width: 15px; height: 11px; background: #e4e4e4; border: 1px solid #ccc; margin-right: 3px; }
.combo2 .dd { margin-left: 9px; }

/* work */
.work { height: 623px; flex: none; display: flex; }
.nav { width: 165px; flex: none; display: flex; flex-direction: column; padding-bottom: 1px; }
.nav-head { height: 15px; flex: none; background: #0650dc; color: #fff; display: flex; align-items: center; font-family: "Noto Sans CJK SC", sans-serif; white-space: nowrap; }
.nav-t { width: 134px; flex: none; letter-spacing: .4px; line-height: 15px; }
.pin { width: 10px; height: 12px; }
.close { width: 17px; height: 14px; margin-left: 3px; }
.btn { height: 22px; flex: none; margin: 1px 1px 0 1px; background: #efefef; border: 1px solid #a6a6a6; text-align: center; line-height: 20px; font-family: "Noto Sans CJK SC", sans-serif; }
.expand { height: 26px; flex: none; display: flex; align-items: center; gap: 6px; padding-left: 6px; margin: 1px 1px 0 1px; background: linear-gradient(#fdfdfd, #e9e9e9); }
.exp { width: 17px; height: 14px; }
.tree { flex: 1; margin: 0 1px 1px 2px; background: #fff; border: 1px solid #8a8a8a; padding-top: 1px; overflow: hidden; position: relative; }
.r0 { height: 16px; display: flex; align-items: center; padding-left: 7px; position: relative; z-index: 1; }
.ch { width: 8px; height: 8px; }
.fd { width: 16px; height: 16px; margin: 0 5px 0 8px; }
.grp-l { position: relative; }
.grp-l::before { content: ""; position: absolute; left: 11px; top: 16px; bottom: 2px; border-left: 1px dotted #777; }
.kids { position: relative; }
.kids::before { content: ""; position: absolute; left: 30px; top: 0; bottom: 8px; border-left: 1px dotted #777; }
.r1 { height: 16px; display: flex; align-items: center; padding-left: 43px; position: relative; white-space: nowrap; }
.r1::before { content: ""; position: absolute; left: 31px; width: 11px; top: 8px; border-top: 1px dotted #777; }
.r1 svg { width: 16px; height: 16px; margin-right: 4px; }
.cur { background: linear-gradient(#d6d6d6, #d6d6d6) no-repeat 40px 0 / 92px 16px; }

/* main */
.main { flex: 1; min-width: 0; display: flex; flex-direction: column; }
.tb2 { height: 26px; flex: none; margin-left: 5px; display: flex; align-items: center; padding: 1px 0 0 4px; background: linear-gradient(#fdfdfd, #ececec); white-space: nowrap; border-radius: 3px 0 0 0; }
.floor { width: 62px; height: 24px; flex: none; background: #fff; display: flex; align-items: center; justify-content: space-between; padding: 0 4px 0 2px; }
.content { flex: 1; min-height: 0; display: flex; }

.mid { width: 195px; flex: none; padding: 7px 0 3px 7px; display: flex; flex-direction: column; }
.search { height: 25px; flex: none; display: flex; align-items: flex-start; }
.search-box { width: 157px; height: 24px; background: #fff; border: 1px solid #777; color: #8a8a8a; padding: 2px 0 0 3px; font-family: "Noto Sans CJK SC", sans-serif; }
.search-ico { width: 18px; height: 18px; margin: 4px 0 0 7px; }
.ctree { width: 182px; flex: 1; background: #fff; border: 1px solid #8a8a8a; overflow: hidden; padding-top: 1px; }
.c0 { height: 17px; display: flex; align-items: center; padding-left: 6px; }
.rooti { width: 17px; height: 17px; margin: 0 4px 0 8px; }
.cg { position: relative; }
.cg::before { content: ""; position: absolute; left: 30px; top: 14px; bottom: 1px; border-left: 1px dotted #777; }
.c1 { height: 16px; display: flex; align-items: center; padding-left: 26px; }
.gi { width: 14px; height: 14px; }
.c1 .gi { margin: 0 6px 0 8px; }
.ck { position: relative; }
.ck::before { content: ""; position: absolute; left: 49px; top: 0; bottom: 8px; border-left: 1px dotted #777; }
.c2 { height: 16px; display: flex; align-items: center; padding-left: 58px; position: relative; white-space: nowrap; }
.c2::before { content: ""; position: absolute; left: 50px; width: 8px; top: 8px; border-top: 1px dotted #777; }
.cell { display: inline-flex; align-items: center; height: 16px; width: 87px; padding-left: 2px; }
.cell .gi { margin-right: 8px; }
.sel { background: #2e62c0; }

.right { flex: 1; min-width: 0; background: #fff; margin-top: 2px; display: flex; flex-direction: column; }
.tabs { height: 20px; flex: none; border-bottom: 1px solid #ccc; }
.tab { width: 62px; height: 20px; background: #fff; border-right: 1px solid #ccc; padding: 2px 0 0 6px; font-family: "Noto Sans CJK SC", sans-serif; }
.panel { flex: 1; margin: 4px 3px 3px 2px; border: 1px solid #b4b4b4; border-right-color: #ccc; padding: 1px 0 0 1px; }
.props { border-collapse: collapse; table-layout: fixed; width: 369px; }
.c-n { width: 21px; } .c-a { width: 190px; } .c-v { width: 127px; } .c-x { width: 31px; }
.props th, .props td { height: 19px; padding: 0; border: 1px solid #c6c6c6; font-weight: 400; line-height: 16px; white-space: nowrap; overflow: hidden; }
.props thead th { height: 22px; background: linear-gradient(#fafafa, #e9e9e9); text-align: center; }
.props thead .hv { background: linear-gradient(#fbdda6, #f3c26a); color: #800080; }
.props tbody th { background: linear-gradient(#fafafa, #ececec); text-align: center; }
.nm { padding-left: 19px !important; }
.link { color: #00f; }
.val { padding-left: 2px !important; }
.chk u { display: block; width: 12px; height: 12px; margin: 1px auto 0; border: 1px solid #333; background: #fff; text-decoration: none; }
.on th { background: #fdd08a !important; color: #7a3a00; }
.on .nm { background: #0078d7; color: #fff; }
.on .val { background: #d6e8f7; }
.sim .hrb { display: inline-block; width: 12px; text-align: center; letter-spacing: 0; font-size: 12px; }
.sim .hrb.first { margin-left: 1px; }
.grp-row { color: #8a8a8a; padding-left: 2px !important; }
.plus { display: inline-block; width: 12px; height: 12px; margin: 0 6px 0 0; border: 1px solid #aaa; color: #222; font: 400 12px/10px "Liberation Sans", sans-serif; text-align: center; vertical-align: -2px; }

/* status */
.status { height: 21px; flex: none; display: flex; gap: 0; padding: 1px 0; background: #f0f0f0; white-space: nowrap; }
.s { border: 1px solid #dadada; border-width: 1px 1px 0 0; background: #f4f4f4; line-height: 17px; padding-left: 2px; }
.s0 { width: 150px; } .s1 { width: 80px; } .s2 { width: 100px; margin-left: 1px; } .s3 { width: 48px; margin-left: 1px; }
.s4 { flex: 1; margin-left: 2px; background: #fff; padding-left: 0; }

/* taskbar */
.taskbar { height: 40px; flex: none; display: flex; background: #08161d; color: #eee; position: relative; }
.start { width: 48px; flex: none; background: #000; display: flex; align-items: center; justify-content: center; }
.winlogo { width: 16px; height: 16px; }
.tsearch { width: 346px; flex: none; background: #333; display: flex; align-items: center; padding-left: 9px; color: #9a9a9a; font-family: "Noto Sans CJK SC", sans-serif; }
.cortana { width: 20px; height: 20px; margin-right: 7px; }
.mic { width: 12px; height: 18px; margin-left: auto; margin-right: 16px; }
.apps { display: flex; flex: none; }
.app { width: 49.300px; height: 40px; flex: none; display: flex; align-items: center; justify-content: center; position: relative; }
.app svg { width: 24px; height: 24px; }
.app.run::after { content: ""; position: absolute; left: 3px; right: 3px; bottom: 0; height: 3px; background: #76b9ed; }
.app.act { background: #384147; }
.app.act svg { width: 22px; height: 28px; }
.cpu { width: 70px; margin-left: 133px; flex: none; display: flex; flex-direction: column; align-items: center; line-height: 16px; padding-top: 4px; font-family: "Noto Sans CJK SC", sans-serif; gap: 1px; }
.tray { display: flex; align-items: center; flex: none; margin-left: 20px; }
.ti-s { width: 12px; height: 12px; margin-right: 9px; }
.ti { width: 20px; height: 16px; margin-right: 3px; }
.ti.kb { width: 24px; margin-left: 3px; margin-right: 9px; }
.zh { font-family: "Noto Sans CJK SC", sans-serif; font-size: 13px; width: 14px; }
.ti-so { width: 16px; height: 18px; margin-left: 14px; }
.clock { width: 72px; margin-left: 3px; flex: none; display: flex; flex-direction: column; align-items: center; line-height: 16px; padding-top: 3px; gap: 3px; font-family: "Noto Sans CJK SC", sans-serif; }
.notif { position: relative; flex: 1; }
.note { width: 15px; height: 15px; position: absolute; left: 9px; top: 6px; }
.badge { position: absolute; left: 14px; top: 18px; width: 18px; height: 18px; border-radius: 50%; background: #333; border: 1px solid #888; color: #fff; font: 700 12px/16px "Liberation Sans", sans-serif; text-align: center; }

/* floating widgets */
.netw { position: absolute; left: 1110px; top: 9px; width: 126px; height: 48px; }
.pill { position: absolute; left: 24px; top: 5px; width: 102px; height: 38px; border-radius: 19px; background: linear-gradient(#fafafa, #e4e4e4); box-shadow: 0 1px 5px rgba(0,0,0,.3); padding: 5px 0 0 24px; }
.speed { display: flex; align-items: center; height: 15px; gap: 5px; font: 10px "Noto Sans", sans-serif; color: #5a2e00; margin-left: 2px; }
.speed svg { width: 9px; height: 10px; margin-right: 3px; }
.plusb { position: absolute; left: 79px; top: 12px; width: 17px; height: 17px; border-radius: 50%; background: #3a80d8; color: #fff; text-align: center; font: 700 14px/16px "Liberation Sans", sans-serif; }
.reddot { position: absolute; left: 10px; top: -5px; width: 9px; height: 9px; border-radius: 50%; background: #d92c2c; }
.ball { position: absolute; left: 0; top: 0; width: 48px; height: 48px; border-radius: 50%; border: 2px solid #f0f0f0; box-shadow: 0 0 0 1px #999, 0 1px 3px rgba(0,0,0,.4); background: linear-gradient(#1e7a48 0, #2b9a5a 42%, #4ecb62 43%, #45c05c 100%); color: #fff; text-align: center; font: 16px/42px "Noto Sans", sans-serif; }

.sogou { position: absolute; left: 1181px; top: 702px; height: 27px; display: flex; align-items: flex-start; }
.so-s { width: 25px; height: 27px; position: relative; z-index: 1; }
.so-bar { width: 160px; height: 24px; margin: 2px 0 0 -1px; background: #f2f6fb; border: 1px solid #d8e2ee; display: flex; align-items: center; padding-left: 10px; }
.so-en { color: #1b7ad0; font: 700 13px "Noto Sans CJK SC", sans-serif; width: 14px; }
.so-p { color: #1b7ad0; font: 700 13px/12px "Liberation Sans", sans-serif; width: 12px; margin-left: 8px; }
.so-i { width: 16px; height: 15px; margin-left: 6px; }

.marks { position: absolute; left: 0; top: 0; width: 1366px; height: 768px; pointer-events: none; }
```
